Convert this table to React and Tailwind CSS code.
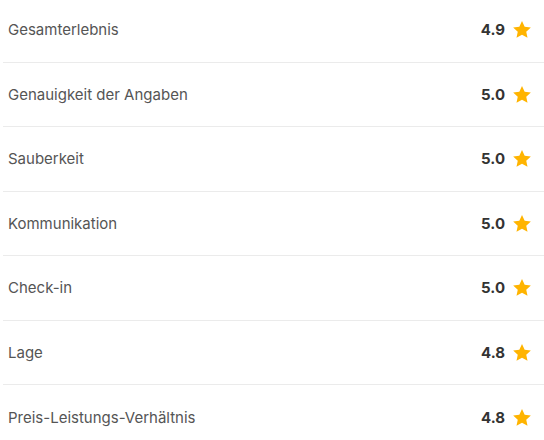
import React from 'react';

const ratings = [
  { label: 'Gesamterlebnis', value: '4.9' },
  { label: 'Genauigkeit der Angaben', value: '5.0' },
  { label: 'Sauberkeit', value: '5.0' },
  { label: 'Kommunikation', value: '5.0' },
  { label: 'Check-in', value: '5.0' },
  { label: 'Lage', value: '4.8' },
  { label: 'Preis-Leistungs-Verhältnis', value: '4.8' },
];

function Star() {
  return (
    <svg width="20" height="20" viewBox="0 0 24 24" className="shrink-0">
      <path
        fill="#ffb400"
        d="M12 1.2l3.2 6.8 7.4.9-5.5 5.1 1.5 7.3L12 17.7l-6.6 3.6 1.5-7.3-5.5-5.1 7.4-.9z"
      />
    </svg>
  );
}

export default function App() {
  return (
    <div className="w-[544px] bg-white pl-[3px] font-['Inter',sans-serif]">
      {ratings.map((r, i) => (
        <div
          key={r.label}
          className={`flex h-[64.5px] items-center justify-between pl-[5px] pr-[12px] pt-[1px] ${
            i < ratings.length - 1 ? 'border-b border-[#ebebeb]' : ''
          } ${i === 0 ? 'mt-[-2px]' : ''}`}
        >
          <span className="text-[15px] text-[#555]">{r.label}</span>
          <div className="flex items-center gap-[7px]">
            <span className="text-[15px] font-bold text-[#333]">{r.value}</span>
            <Star />
          </div>
        </div>
      ))}
    </div>
  );
}
